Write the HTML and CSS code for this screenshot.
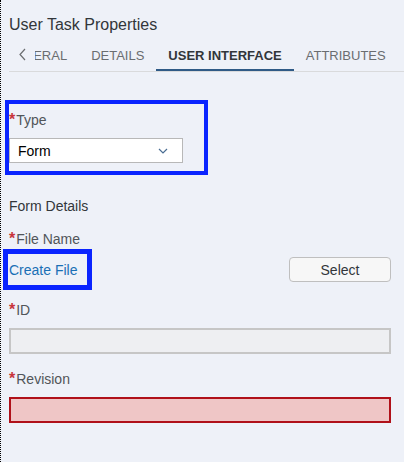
FILE: index.html
```html
<!DOCTYPE html>
<html>
<head>
<meta charset="utf-8">
<link rel="stylesheet" href="styles.css">
</head>
<body>
<div class="panel">
  <div class="title">User Task Properties</div>
  <div class="tabbar">
    <div class="tab-arrow">
      <svg width="7" height="13" viewBox="0 0 7 13"><path d="M6 1 L1 6.5 L6 12" fill="none" stroke="#6a6d70" stroke-width="1.2"/></svg>
    </div>
    <div class="tab-scroll">
      <div class="tab-strip">
        <div class="tab">GENERAL</div>
        <div class="tab">DETAILS</div>
        <div class="tab active">USER INTERFACE</div>
        <div class="tab">ATTRIBUTES</div>
      </div>
    </div>
  </div>

  <div class="form">
    <div class="hl hl-type">
      <div class="label"><span class="req">*</span>Type</div>
      <div class="select">
        <span>Form</span>
        <svg width="10" height="6" viewBox="0 0 10 6"><path d="M1 1 L5 5 L9 1" fill="none" stroke="#4a6d93" stroke-width="1.2"/></svg>
      </div>
    </div>

    <div class="section">Form Details</div>

    <div class="label"><span class="req">*</span>File Name</div>
    <div class="file-row">
      <div class="hl hl-link"><a class="link">Create File</a></div>
      <div class="btn">Select</div>
    </div>

    <div class="label"><span class="req">*</span>ID</div>
    <div class="input disabled"></div>

    <div class="label"><span class="req">*</span>Revision</div>
    <div class="input error"></div>
  </div>
</div>
</body>
</html>
```

FILE: styles.css
```css
* { box-sizing: border-box; }
html, body { margin: 0; padding: 0; }
body {
  background: #eef1f8;
  font-family: "Liberation Sans", Arial, sans-serif;
  color: #32363a;
}
.panel {
  width: 404px;
  height: 462px;
  border-left: 1px dotted #000;
  padding-left: 8px;
  overflow: hidden;
}
.title {
  font-size: 16px;
  line-height: 20px;
  padding-top: 15px;
  height: 41px;
  color: #32363a;
}
.tabbar {
  display: flex;
  align-items: stretch;
  height: 31px;
  border-bottom: 1px solid #d9dadc;
}
.tab-arrow {
  width: 26px;
  display: flex;
  align-items: center;
  padding-left: 10px;
  padding-bottom: 4px;
}
.tab-scroll {
  flex: 1;
  overflow: hidden;
}
.tab-strip {
  display: flex;
  margin-left: -42px;
  height: 100%;
}
.tab {
  padding: 0 12px;
  font-size: 13px;
  line-height: 16px;
  padding-top: 7px;
  color: #6a6d70;
  white-space: nowrap;
  height: 100%;
}
.tab.active {
  color: #32363a;
  font-weight: bold;
  border-bottom: 3px solid #2f5a86;
  height: calc(100% + 1px);
}
.form {
  padding-top: 32px;
}
.hl {
  outline: 4px solid #0a24ff;
}
.hl-type {
  width: 195px;
  padding-top: 7px;
  padding-bottom: 8px;
}
.label {
  font-size: 14px;
  line-height: 18px;
  color: #515559;
}
.req {
  color: #c8353b;
  font-weight: bold;
  font-size: 16px;
  margin-right: 1px;
}
.select {
  margin-top: 9px;
  width: 174px;
  height: 25px;
  background: #fff;
  border: 1px solid #b8b8b8;
  display: flex;
  align-items: center;
  justify-content: space-between;
  padding: 0 14px 0 8px;
  font-size: 14px;
  color: #000;
}
.section {
  margin-top: 26px;
  font-size: 14px;
  line-height: 18px;
  height: 33px;
  color: #32363a;
}
.file-row {
  display: flex;
  justify-content: space-between;
  align-items: center;
  margin-top: 6px;
  width: 382px;
  height: 31px;
}
.hl-link {
  outline-width: 5px;
  width: 79px;
  height: 31px;
  display: flex;
  align-items: center;
  margin-left: -1px;
  padding-left: 1px;
}
.link {
  color: #1a6fb5;
  font-size: 14px;
}
.btn {
  width: 102px;
  height: 25px;
  border: 1px solid #bfbfbf;
  border-radius: 4px;
  background: #f7f7f7;
  display: flex;
  align-items: center;
  justify-content: center;
  font-size: 14px;
  color: #32363a;
}
.file-row + .label { margin-top: 16px; }
.input {
  margin-top: 9px;
  width: 382px;
  height: 26px;
}
.input.disabled {
  background: #eeeff2;
  border: 2px solid #c6c6c6;
}
.input.disabled + .label { margin-top: 16px; }
.input.error {
  background: #efc6c6;
  border: 2px solid #b0111a;
}
```
